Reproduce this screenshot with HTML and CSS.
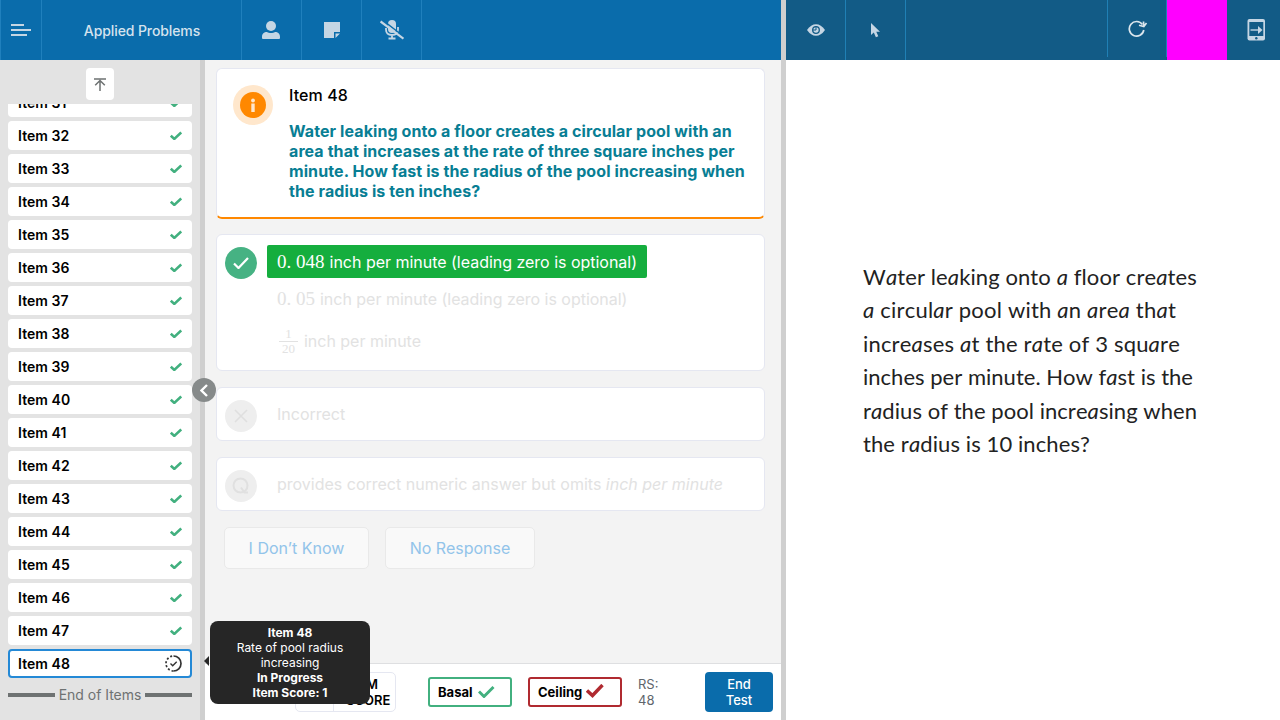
FILE: index.html
```html
<!DOCTYPE html>
<html lang="en">
<head>
<meta charset="utf-8">
<title>Applied Problems</title>
<link rel="stylesheet" href="styles.css">
</head>
<body>
<div class="app">
  <section class="examiner">
    <header class="topbar">
      <div class="cell menu"><svg width="20" height="14" viewBox="0 0 20 14"><path d="M0 2h13M0 7h20M0 12h16" stroke="#c5d6e4" stroke-width="2"/></svg></div>
      <div class="cell title">Applied Problems</div>
      <div class="cell tool person"><svg width="18" height="19" viewBox="0 0 18 19" fill="#c5d6e4"><circle cx="9" cy="5" r="5"/><path d="M0 17v-1c0-3.500 2-5 5-5 2 1.300 6 1.300 8 0 3 0 5 1.500 5 5v1q0 1-1 1H1q-1 0-1-1z"/></svg></div>
      <div class="cell tool"><svg width="16" height="16" viewBox="0 0 16 16" fill="#c5d6e4"><path d="M0 0h16v10h-6v6H0zM11.500 11.500H16L11.500 16z"/></svg></div>
      <div class="cell tool"><svg width="24" height="20" viewBox="0 0 24 20"><rect x="8" y="0" width="8" height="13" rx="4" fill="#c5d6e4"/><path d="M6 8v1.500c0 3.500 2.500 5.500 6 5.500s6-2 6-5.500V7M12 15v4M8.500 18.500h7" fill="none" stroke="#c5d6e4" stroke-width="1.800"/><path d="M2 -.3 24.500 17" stroke="#0a6cab" stroke-width="1.500"/><path d="M.5 1.500 23.500 18.700" stroke="#c5d6e4" stroke-width="2.300"/></svg></div>
    </header>
    <div class="workspace">
      <aside class="sidebar">
        <button class="to-top"><svg width="12" height="13" viewBox="0 0 12 13" fill="none" stroke="#6e7272" stroke-width="1.500"><path d="M0 1h12M6 13V2.500M1.200 7.300 6 2.500l4.800 4.800"/></svg></button>
        <ul class="items" id="items"></ul>
        <div class="end"><span>End of Items</span></div>
      </aside>
      <main class="main">
        <div class="content">
          <section class="card question">
            <div class="info"><svg width="26" height="26" viewBox="0 0 26 26"><circle cx="13" cy="13" r="13" fill="#ff8800"/><circle cx="13" cy="8.500" r="1.900" fill="#ffe7cc"/><path d="M11.300 11.500h3.400V20h-3.400z" fill="#ffe7cc"/></svg></div>
            <div>
              <h2>Item 48</h2>
              <p class="prompt">Water leaking onto a floor creates a circular pool with an<br>area that increases at the rate of three square inches per<br>minute. How fast is the radius of the pool increasing when<br>the radius is ten inches?</p>
            </div>
          </section>
          <section class="card correct">
            <div class="mark ok"><svg width="16" height="12" viewBox="0 0 16 12"><path d="M1 6.500 5.500 11 15 1" fill="none" stroke="#fff" stroke-width="2.200"/></svg></div>
            <div class="answers">
              <div class="answer chosen"><span class="math m1">0. 048</span>inch per minute (leading zero is optional)</div>
              <div class="answer second"><span class="math m2">0. 05</span>inch per minute (leading zero is optional)</div>
              <div class="answer third"><span class="fraction"><span>1</span><span>20</span></span>inch per minute</div>
            </div>
          </section>
          <section class="card option">
            <div class="mark"><svg width="14" height="14" viewBox="0 0 14 14"><path d="m1 1 12 12M13 1 1 13" stroke="#dfdfdf" stroke-width="1.600"/></svg></div>
            <div class="label">Incorrect</div>
          </section>
          <section class="card option">
            <div class="mark"><svg width="18" height="18" viewBox="0 0 18 18" fill="none" stroke="#e0e0e0" stroke-width="2"><circle cx="8.500" cy="8.500" r="7"/><path d="m9 10.500 3.500 5H16"/></svg></div>
            <div class="label">provides correct numeric answer but omits <i>inch per minute</i></div>
          </section>
          <div class="responses"><button class="r1">I Don’t Know</button><button class="r2">No Response</button></div>
        </div>
        <footer class="footer">
          <div class="score"><div class="score-value"></div><div class="score-label">ITEM<br>SCORE</div></div>
          <div class="status basal">Basal<svg width="17" height="12" viewBox="0 0 17 12"><path d="m1 5.500 5 5L15.500 1" fill="none" stroke="#42b07f" stroke-width="2.900"/></svg></div>
          <div class="status ceiling">Ceiling<svg width="18" height="14" viewBox="0 0 18 14"><path d="m1 6.500 5.500 5L16.500 1" fill="none" stroke="#b02a30" stroke-width="3.400"/></svg></div>
          <div class="rs">RS:<br>48</div>
          <button class="finish">End<br>Test</button>
        </footer>
      </main>
    </div>
  </section>
  <div class="divider"></div>
  <section class="examinee">
    <header class="topbar dark">
      <div class="cell eye"><svg width="18" height="12" viewBox="0 0 18 12"><path d="M0 6Q4 .2 9 .2T18 6q-4 5.800-9 5.800T0 6z" fill="#c5d6e4"/><circle cx="9" cy="6" r="3.300" fill="none" stroke="#125b86" stroke-width="1.300"/><path d="M9 2.500V6H5.500" stroke="#125b86" fill="none"/></svg></div>
      <div class="cell pointer"><svg width="10" height="15" viewBox="0 0 10 15"><path d="M1 0v12l2.800-2.500 2.100 4.800 2.400-1-2-4.600H10z" fill="#c5d6e4"/></svg></div>
      <div class="spacer"></div>
      <div class="cell reload"><svg width="20" height="18" viewBox="0 0 20 18" fill="none" stroke="#dce6ed"><path d="M14.500 4.500A7.300 7.300 0 1 0 15.800 10" stroke-width="1.700"/><path d="m11 5.200 4.800 1.300L18.500 3M15.500 1.500l.3 5" stroke-width="1.700"/></svg></div>
      <div class="swatch"></div>
      <div class="device"><svg width="18" height="22" viewBox="0 0 18 22"><rect x=".5" width="17.500" height="21.500" rx="2" fill="#c5d6e4"/><path d="M2.300 3h14v14h-14z" fill="#125b86"/><path d="M3.500 11h8" stroke="#c5d6e4" stroke-width="1.400"/><path d="m11 7 4.500 4-4.500 4z" fill="#c5d6e4"/><circle cx="9.300" cy="19.200" r="1.200" fill="#125b86"/></svg></div>
    </header>
    <div class="stimulus">
      <p class="reading" id="reading"></p>
    </div>
  </section>
  <button class="collapse"><svg width="8" height="13" viewBox="0 0 8 13"><path d="M7 1 1.500 6.500 7 12" fill="none" stroke="#fff" stroke-width="2.400"/></svg></button>
  <div class="tooltip"><b>Item 48</b><br>Rate of pool radius<br>increasing<br><b>In Progress</b><br><b>Item Score: 1</b></div>
</div>
<script src="app.js"></script>
</body>
</html>
```
FILE: app.js
```js
const check = '<svg width="12" height="9" viewBox="0 0 12 9"><path d="m.8 4.600 3.500 3.300L11.200 1.500" fill="none" stroke="#42b07f" stroke-width="2.600"/></svg>';
const pending = '<svg width="17" height="17" viewBox="0 0 17 17" fill="none" stroke="#333"><path d="M8.500 1a7.500 7.500 0 0 1 0 15" stroke-width="1.700"/><path d="M8.500 16a7.500 7.500 0 0 1 0-15" stroke-width="1.700" stroke-dasharray="2 2"/><path d="m5.500 8.500 2.200 2.200 4-4" stroke-width="1.400"/></svg>';
const list = document.getElementById('items');
for (let n = 31; n <= 48; n++) {
  const row = document.createElement('li');
  row.className = n === 48 ? 'item current' : 'item';
  row.innerHTML = `<span>Item ${n}</span>${n === 48 ? pending : check}`;
  list.append(row);
}

// Reading text uses the single-storey form of the letter a.
const lines = [
  ['Water leaking onto a floor creates', 334],
  ['a circular pool with an area that', 313],
  ['increases at the rate of 3 square', 317],
  ['inches per minute. How fast is the', 330],
  ['radius of the pool increasing when', 334],
  ['the radius is 10 inches?', 227]
];
const reading = document.getElementById('reading');
for (const [text, width] of lines) {
  const line = document.createElement('span');
  line.className = 'line';
  line.innerHTML = text.replace(/a/g, '<i>a</i>');
  reading.append(line, ' ');
  const natural = line.getBoundingClientRect().width;
  line.style.letterSpacing = (width - natural) / text.length + 'px';
}
```
FILE: styles.css
```css
* { box-sizing: border-box; }
body { margin: 0; font-family: Inter, "Liberation Sans", sans-serif; color: #000; }
button { font: inherit; border: 0; padding: 0; display: flex; align-items: center; justify-content: center; }
svg { display: block; flex: none; }
.app { position: relative; display: flex; width: 1280px; height: 720px; overflow: hidden; }
.examiner { width: 781px; display: flex; flex-direction: column; }
.topbar { height: 60px; flex: none; display: flex; background: #0a6cab; color: #d5e3ee; }
.cell { display: flex; align-items: center; justify-content: center; border-right: 1px solid #2080bd; }
.menu { width: 42px; border-left: 1px solid #2080bd; }
.title { width: 200px; font-size: 14px; font-weight: 500; padding: 1px 0 0 1px; letter-spacing: -.1px; }
.tool { width: 60px; }
.person { padding-right: 2px; }
.workspace { flex: 1; display: flex; min-height: 0; }
.sidebar { width: 205px; background: #e3e3e3; border-right: 5px solid #cfcfcf; padding: 8px 8px 0; display: flex; flex-direction: column; }
.to-top { width: 28px; height: 32px; background: #fff; border-radius: 4px; align-self: center; flex: none; }
.items { list-style: none; margin: 4px 0 0; padding: 0; height: 574px; overflow: hidden; display: flex; flex-direction: column; justify-content: flex-end; gap: 4px; }
.item { height: 29px; flex: none; background: #fff; border-radius: 4px; display: flex; align-items: center; justify-content: space-between; padding: 0 10px; font-size: 14px; font-weight: 600; letter-spacing: .06px; }
.current { border: 2px solid #2489d6; padding: 0 8px; }
.end { display: flex; align-items: center; gap: 4px; font-size: 14px; color: #6e7272; height: 33px; letter-spacing: -.02px; }
.end::before, .end::after { content: ""; height: 4px; flex: 1; background: #6e7272; }
.main { flex: 1; background: #f3f3f3; display: flex; flex-direction: column; }
.content { flex: 1; padding: 8px 16px 0 11px; }
.card { background: #fff; border: 1px solid #e5e7f1; border-radius: 6px; margin-bottom: 16px; display: flex; }
.question { height: 151px; border-bottom: 2px solid #ff8800; margin-bottom: 15px; padding: 16px 0 0 16px; gap: 16px; }
.info { width: 40px; height: 40px; border-radius: 50%; background: #ffe7cc; display: grid; place-items: center; }
h2 { margin: 0; font-size: 16px; line-height: 20px; font-weight: 500; letter-spacing: .1px; }
.prompt { margin: 16px 0 0; font-size: 16px; line-height: 20px; font-weight: 700; color: #087e94; white-space: nowrap; letter-spacing: .09px; }
.correct { height: 137px; padding: 10px 0 0 8px; }
.mark { width: 32px; height: 32px; flex: none; border-radius: 50%; background: #eee; display: grid; place-items: center; margin-top: 2px; }
.ok { background: #46b283; }
.answers { margin-left: 10px; font-size: 16px; white-space: nowrap; color: #e2e2e2; letter-spacing: -.02px; }
.answer { display: flex; align-items: center; height: 33px; padding: 0 10px; }
.chosen { width: 380px; background: #15ae3e; color: #fff; border-radius: 2px; }
.second { margin-top: 4px; }
.third { margin-top: 9px; }
.math { font-family: "Liberation Serif", serif; font-size: 19px; margin-right: 5px; }
.m1 { width: 48px; }
.m2 { width: 38px; }
.fraction { width: 19px; margin: 1px 6px 0 2px; font: 13px/14px "Liberation Serif", serif; text-align: center; }
.fraction span { display: block; }
.fraction span + span { border-top: 1px solid #e2e2e2; }
.option { height: 54px; padding: 10px 0 0 8px; }
.label { margin: 6px 0 0 20px; font-size: 16px; line-height: 20px; color: #e2e2e2; }
.responses { display: flex; gap: 16px; margin-left: 8px; }
.responses button { height: 42px; background: #f9f9f9; border: 1px solid #e9e9e9; border-radius: 5px; color: #92c4ea; font-size: 16px; }
.r1 { width: 145px; }
.r2 { width: 150px; }
.footer { height: 57px; border-top: 1px solid #dedfe1; background: #fff; display: flex; align-items: center; padding-left: 90px; font-size: 13px; }
.score { width: 101px; height: 40px; display: flex; border: 1px solid #e5e7f1; border-radius: 5px; }
.score-value { width: 38px; border-right: 1px solid #e5e7f1; }
.score-label { flex: 1; display: flex; align-items: center; font-weight: 600; line-height: 16px; padding-left: 12px; }
.status { height: 30px; border: 2px solid #42b07f; border-radius: 3px; display: flex; align-items: center; padding: 0 8px; gap: 5px; font-weight: 700; font-size: 13px; }
.basal { width: 84px; margin-left: 32px; }
.ceiling { width: 94px; margin-left: 16px; border-color: #b02a30; gap: 4px; }
.ceiling svg { margin-bottom: 3px; }
.rs { width: 67px; margin-left: 16px; line-height: 16px; color: #60656c; }
.finish { width: 68px; height: 40px; background: #0a6cab; color: #fff; border-radius: 4px; line-height: 16px; font-weight: 500; }
.divider { width: 5px; background: #cfcfcf; }
.examinee { width: 494px; background: #fff; }
.dark { background: #125b86; }
.dark .cell { border-color: #2080b5; }
.eye, .pointer { width: 60px; }
.pointer { padding-right: 1px; }
.spacer { flex: 1; }
.reload { width: 60px; height: 57px; border-left: 1px solid; padding: 1px 0 0 1px; }
.swatch { width: 60px; background: #f0f; }
.device { width: 53px; display: flex; align-items: center; padding: 0 0 1px 20px; }
.stimulus { padding: 199.6px 0 0 77px; }
.reading { margin: 0; display: flex; flex-direction: column; align-items: flex-start; font-family: Lato, sans-serif; font-size: 22px; line-height: 33.5px; color: #222; }
.line { white-space: nowrap; font-kerning: none; }
.collapse { position: absolute; left: 192px; top: 378px; width: 24px; height: 24px; border-radius: 50%; background: #868a8a; }
.tooltip { position: absolute; left: 210px; top: 620.5px; width: 160px; height: 83px; border-radius: 8px; background: #262626; color: #fff; font-size: 12px; line-height: 15px; text-align: center; padding-top: 4.5px; }
.tooltip::before { content: ""; position: absolute; left: -6px; top: 35.5px; border: 5px solid transparent; border-right-color: #262626; border-left: 0; }
```
